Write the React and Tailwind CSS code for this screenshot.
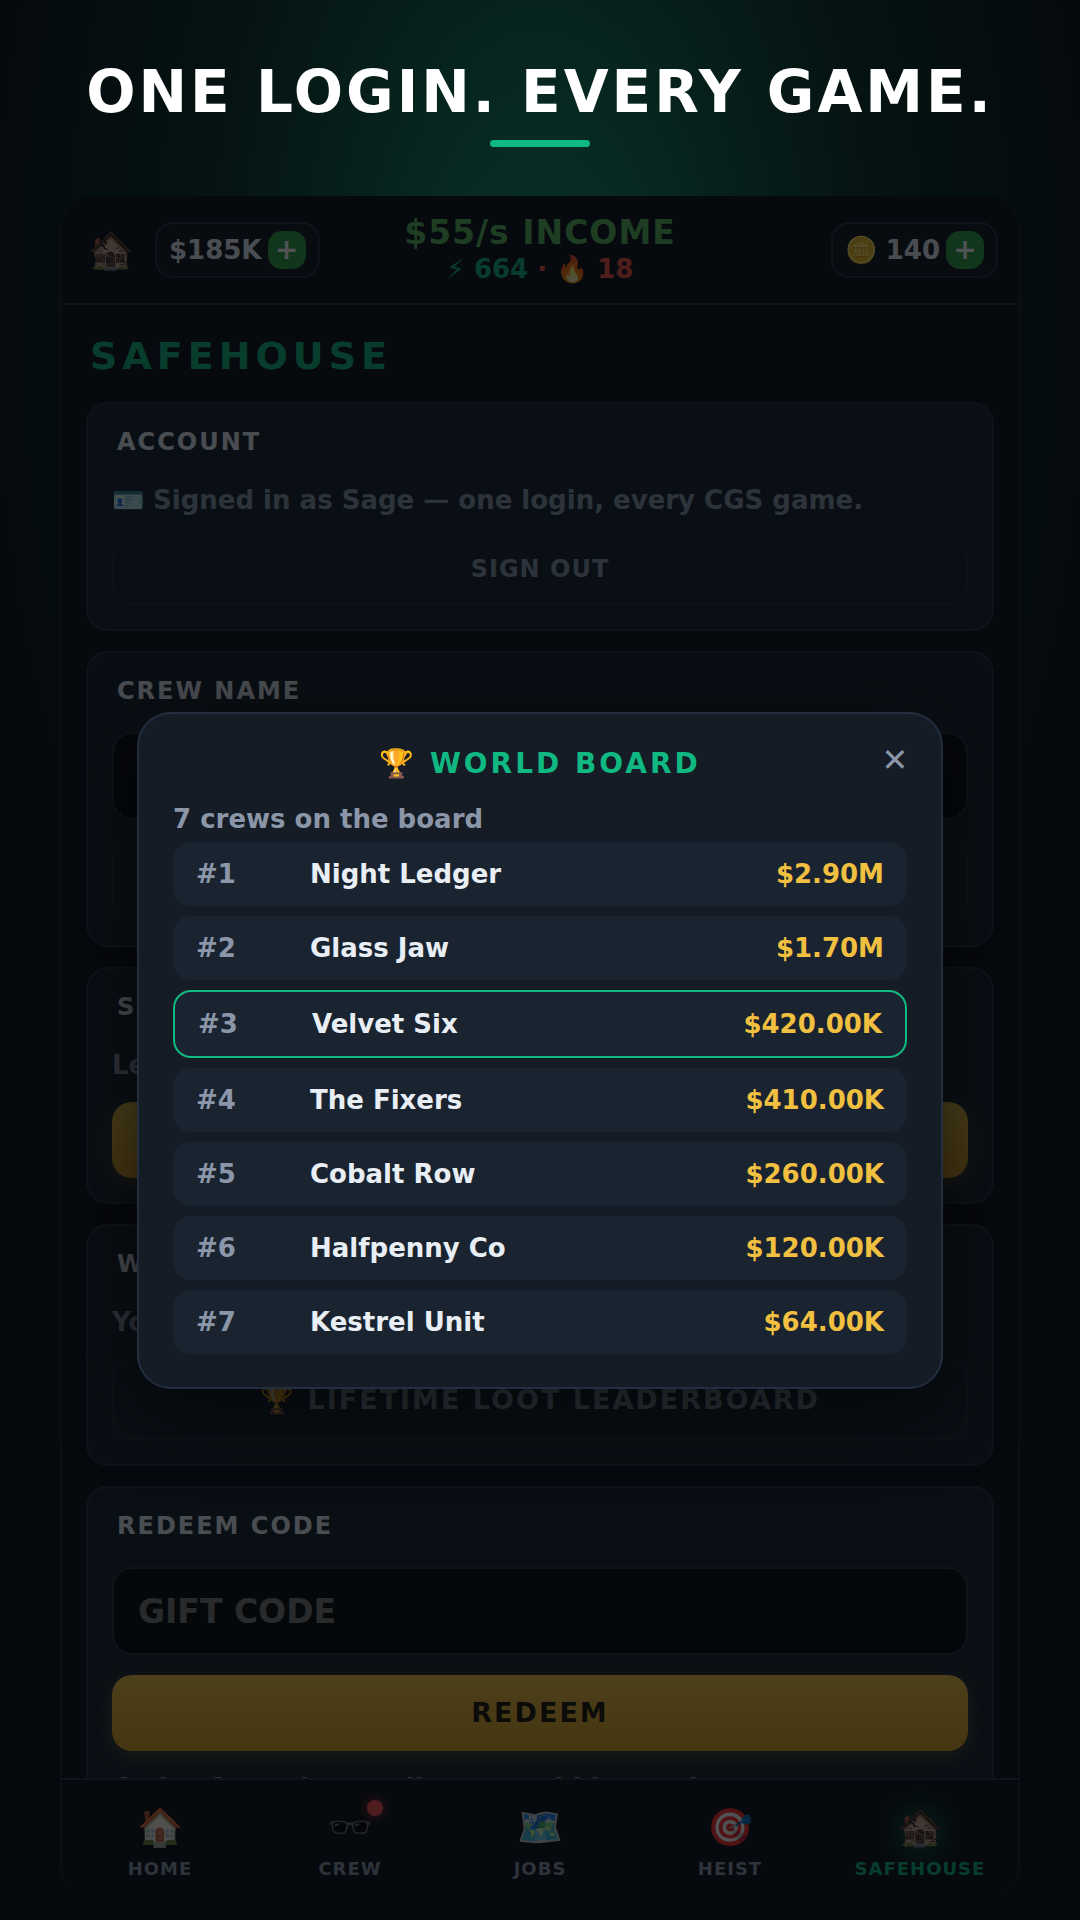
import { useState } from "react";

const crews = [
  { rank: 1, name: "Night Ledger", loot: "$2.90M" },
  { rank: 2, name: "Glass Jaw", loot: "$1.70M" },
  { rank: 3, name: "Velvet Six", loot: "$420.00K", mine: true },
  { rank: 4, name: "The Fixers", loot: "$410.00K" },
  { rank: 5, name: "Cobalt Row", loot: "$260.00K" },
  { rank: 6, name: "Halfpenny Co", loot: "$120.00K" },
  { rank: 7, name: "Kestrel Unit", loot: "$64.00K" },
];

const tabs = [
  { id: "home", label: "HOME", icon: "🏠" },
  { id: "crew", label: "CREW", icon: "🕶️", alert: true },
  { id: "jobs", label: "JOBS", icon: "🗺️" },
  { id: "heist", label: "HEIST", icon: "🎯" },
  { id: "safehouse", label: "SAFEHOUSE", icon: "🏚️" },
];

function Wallet({ children, label }) {
  return (
    <div className="flex h-14 items-center gap-1.5 rounded-[18px] border-2 border-[#232f3d] bg-[#10161e] px-3 text-[26px] leading-[30px] text-[#e8eef4]">
      <span className="whitespace-nowrap">{children}</span>
      <button
        type="button"
        aria-label={label}
        className="flex size-[38px] items-center justify-center rounded-[14px] bg-[#2ea043] text-[28px] leading-[30px] text-white"
      >
        +
      </button>
    </div>
  );
}

function TopBar() {
  return (
    <header className="grid h-[109px] shrink-0 grid-cols-[1fr_auto_1fr] items-center border-b-2 border-[#232f3d] bg-[#080c12] px-[21px]">
      <div className="flex items-center gap-[17px]">
        <button type="button" aria-label="Safehouse" className="flex w-14 justify-center text-[38px] leading-[44px]">
          🏚️
        </button>
        <Wallet label="Get cash">$185K</Wallet>
      </div>
      <div className="flex flex-col items-center gap-0.5 pb-0.5">
        <p className="text-[33px] leading-[38px] tracking-[1px] text-[#57b95b]">$55/s INCOME</p>
        <p className="text-[26px] leading-[30px] text-[#f85149]">
          <span className="text-[#10b981]">⚡︎ 664</span> · 🔥 18
        </p>
      </div>
      <div className="flex justify-end">
        <Wallet label="Get coins">🪙 140</Wallet>
      </div>
    </header>
  );
}

function Card({ title, children }) {
  return (
    <section className="flex flex-col gap-5 rounded-[22px] border-2 border-[#232f3d] bg-[#161f2c] p-6">
      <h3 className="mb-[7px] ml-[5px] text-2xl leading-7 tracking-[2px] text-[#e8eef4]">{title}</h3>
      {children}
    </section>
  );
}

function Note({ children }) {
  return <p className="truncate text-[26px] leading-[34px] text-[#8b96a8]">{children}</p>;
}

function GhostButton({ children, onClick }) {
  return (
    <button
      type="button"
      onClick={onClick}
      className="h-[81px] rounded-[20px] border-2 border-[#202a37] text-[27px] leading-8 tracking-[2px] text-[#8b96a8]"
    >
      {children}
    </button>
  );
}

function GoldButton({ children }) {
  return (
    <button
      type="button"
      className="h-[76px] rounded-[20px] bg-linear-to-b from-[#f2c040] to-[#d9a21c] text-[27px] leading-8 tracking-[2px] text-[#1a1405] shadow-[0_6px_20px_rgba(242,192,64,0.25)]"
    >
      {children}
    </button>
  );
}

function TextBox({ label, ...props }) {
  return (
    <input
      type="text"
      aria-label={label}
      className="h-[88px] rounded-[20px] border-2 border-[#232f3d] bg-[#05080d] px-6 text-[33px] text-[#e8eef4] placeholder:text-[#7b7b7b]"
      {...props}
    />
  );
}

function Safehouse({ onOpenBoard }) {
  const [crewName, setCrewName] = useState("");
  const [code, setCode] = useState("");

  return (
    <main className="min-h-0 flex-1 overflow-hidden px-[25px] pt-[29px]">
      <h2 className="mb-6 ml-1 text-[38px] leading-[44px] tracking-[5px] text-[#10b981]">SAFEHOUSE</h2>
      <div className="flex flex-col gap-5">
        <Card title="ACCOUNT">
          <Note>🪪 Signed in as Sage — one login, every CGS game.</Note>
          <button
            type="button"
            className="h-[68px] rounded-[20px] border-2 border-[#202a37] pb-1 text-2xl leading-7 tracking-[1px] text-[#8b96a8]"
          >
            SIGN OUT
          </button>
        </Card>
        <Card title="CREW NAME">
          <TextBox label="Crew name" value={crewName} onChange={(e) => setCrewName(e.target.value)} />
          <GhostButton>RENAME</GhostButton>
        </Card>
        <Card title="SAVE">
          <Note>Legends never lose a score.</Note>
          <GoldButton>SAVE</GoldButton>
        </Card>
        <Card title="WORLD">
          <Note>Your crew against the city.</Note>
          <GhostButton onClick={onOpenBoard}>🏆 LIFETIME LOOT LEADERBOARD</GhostButton>
        </Card>
        <Card title="REDEEM CODE">
          <TextBox
            label="Gift code"
            placeholder="GIFT CODE"
            value={code}
            onChange={(e) => setCode(e.target.value)}
          />
          <GoldButton>REDEEM</GoldButton>
          <Note>Codes from the small crews add bonus loot.</Note>
        </Card>
      </div>
    </main>
  );
}

function TabBar({ active, onChange }) {
  return (
    <nav className="grid shrink-0 grid-cols-5 border-t-2 border-[#232f3d] bg-[#080c12] px-1 py-6">
      {tabs.map((tab) => (
        <button
          key={tab.id}
          type="button"
          onClick={() => onChange(tab.id)}
          className={`flex flex-col items-center gap-1.5 ${tab.id === active ? "text-[#10b981]" : "text-[#8b96a8]"}`}
        >
          <span
            className={`relative text-[37px] leading-[48px] ${
              tab.id === active ? "drop-shadow-[0_0_16px_rgba(16,185,129,0.7)]" : ""
            }`}
          >
            {tab.icon}
            {tab.alert && (
              <span className="absolute -top-1 -right-2.5 size-4 rounded-full bg-[#ff4d4a] shadow-[0_0_12px_rgba(255,77,74,0.7)]" />
            )}
          </span>
          <span className="text-lg leading-[22px] tracking-[1px]">{tab.label}</span>
        </button>
      ))}
    </nav>
  );
}

function WorldBoard({ onClose }) {
  return (
    <div className="absolute inset-0 flex items-center bg-[#05080c]/70 px-[76px]">
      <div
        role="dialog"
        aria-labelledby="board-title"
        className="relative w-full rounded-[34px] border-2 border-[#232f3f] bg-[#151c25] px-[34px] pt-8 pb-[33px] shadow-[0_20px_80px_rgba(0,0,0,0.6)]"
      >
        <h2 id="board-title" className="text-center text-[28px] leading-9 tracking-[3px] text-[#10b981]">
          🏆 WORLD BOARD
        </h2>
        <button
          type="button"
          aria-label="Close"
          onClick={onClose}
          className="absolute top-7 right-7 flex size-9 items-center justify-center text-[32px] leading-9 text-[#8b96a8]"
        >
          ✕
        </button>
        <p className="mt-5 text-[26px] leading-[34px] text-[#8b96a8]">{crews.length} crews on the board</p>
        <ol className="mt-1.5 flex flex-col gap-2.5">
          {crews.map((crew) => (
            <li
              key={crew.rank}
              className={`flex items-center rounded-[18px] bg-[#1a2430] px-[23px] py-4 text-[26px] leading-8 ${
                crew.mine ? "border-2 border-[#10b981]" : ""
              }`}
            >
              <span className="w-[114px] text-[#8b96a8]">#{crew.rank}</span>
              <span className="flex-1 text-[#e8eef4]">{crew.name}</span>
              <span className="text-[#f2c040]">{crew.loot}</span>
            </li>
          ))}
        </ol>
      </div>
    </div>
  );
}

export default function App() {
  const [active, setActive] = useState("safehouse");
  const [boardOpen, setBoardOpen] = useState(true);

  return (
    <div className="flex h-screen flex-col bg-[#05080d] bg-[radial-gradient(55%_55%_at_50%_16%,#09332a,#051312_56%,#05080d)] px-[60px] pb-4 font-['DejaVu_Sans',sans-serif] font-bold">
      <div className="flex h-[196px] shrink-0 flex-col items-center pt-[58px]">
        <h1 className="text-[58px] leading-[68px] whitespace-nowrap tracking-[3px] text-white">
          ONE LOGIN. EVERY GAME.
        </h1>
        <div className="mt-3.5 h-[7px] w-[100px] rounded-full bg-[#10b981]" />
      </div>
      <div className="relative flex min-h-0 flex-1 flex-col overflow-hidden rounded-[34px] border-x border-white/3 bg-[#080c12]">
        <TopBar />
        <Safehouse onOpenBoard={() => setBoardOpen(true)} />
        <TabBar active={active} onChange={setActive} />
        {boardOpen && <WorldBoard onClose={() => setBoardOpen(false)} />}
      </div>
    </div>
  );
}
